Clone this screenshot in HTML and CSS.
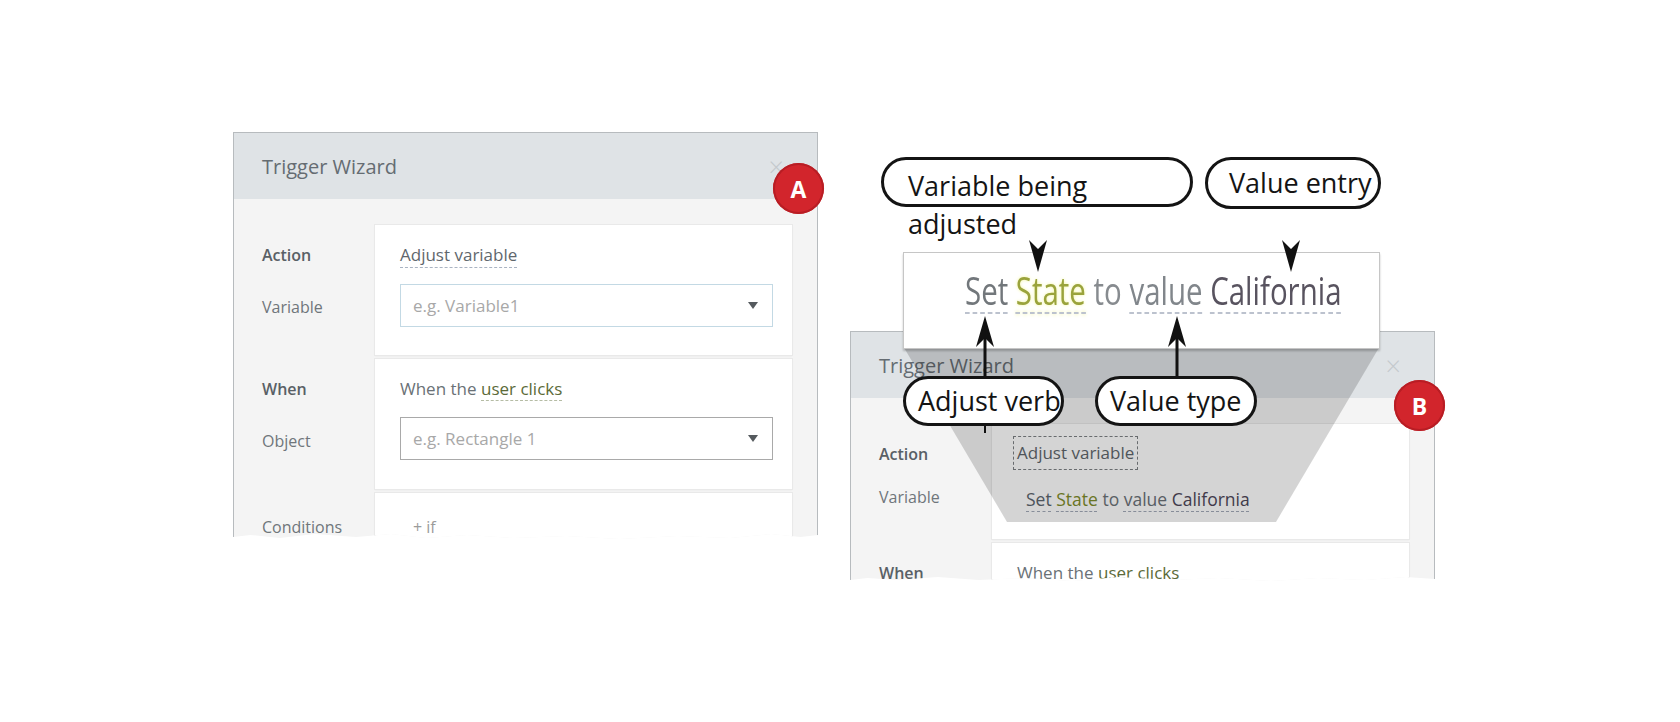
FILE: index.html
```html
<!DOCTYPE html>
<html lang="en">
<head>
<meta charset="utf-8">
<title>Trigger Wizard figure</title>
<link rel="stylesheet" href="styles.css">
</head>
<body>
<div class="figure">

  <section class="wizard wizard-a">
    <header class="wz-head"><span class="wz-title">Trigger Wizard</span><span class="wz-close">×</span></header>
    <div class="wz-body">
      <div class="wz-row">
        <div class="wz-labels"><span class="lbl-strong">Action</span><span>Variable</span></div>
        <div class="wz-card">
          <span class="link-text">Adjust variable</span>
          <div class="select select-focus"><span class="ph">e.g. Variable1</span><span class="caret"></span></div>
        </div>
      </div>
      <div class="wz-row">
        <div class="wz-labels"><span class="lbl-strong">When</span><span>Object</span></div>
        <div class="wz-card">
          <span class="plain-text">When the <span class="obj">user clicks</span></span>
          <div class="select"><span class="ph">e.g. Rectangle 1</span><span class="caret"></span></div>
        </div>
      </div>
      <div class="wz-row wz-row-cond">
        <div class="wz-labels"><span>Conditions</span></div>
        <div class="wz-card"><span class="add-if">+ if</span></div>
      </div>
    </div>
  </section>

  <section class="wizard wizard-b">
    <header class="wz-head"><span class="wz-title">Trigger Wizard</span><span class="wz-close">×</span></header>
    <div class="wz-body">
      <div class="wz-row wz-row-short">
        <div class="wz-labels wz-labels-tight"><span class="lbl-strong">Action</span><span>Variable</span></div>
        <div class="wz-card wz-card-b">
          <span class="dotted-box">Adjust variable</span>
          <span class="sentence"><span class="u w-set">Set</span> <span class="u w-state">State</span> <span class="w-to">to</span> <span class="u w-value">value</span> <span class="u w-cal">California</span></span>
        </div>
      </div>
      <div class="wz-row">
        <div class="wz-labels"><span class="lbl-strong">When</span><span>Object</span></div>
        <div class="wz-card">
          <span class="plain-text">When the <span class="obj">user clicks</span></span>
        </div>
      </div>
    </div>
  </section>

  <svg class="shade" width="1680" height="722" viewBox="0 0 1680 722" aria-hidden="true">
    <polygon points="903,346 1380,346 1276,522 1007,522" fill="rgba(0,0,0,0.17)"/>
  </svg>

  <div class="zoom-box">
    <span class="big-sentence"><span class="u w-set">Set</span> <span class="u w-state">State</span> <span class="w-to">to</span> <span class="u w-value">value</span> <span class="u w-cal">California</span></span>
  </div>

  <svg class="arrows" width="1680" height="722" viewBox="0 0 1680 722" aria-hidden="true">
    <path d="M1038 272 L1029 240 L1038 249 L1047 240 Z" fill="#111"/>
    <path d="M1291 272 L1282 240 L1291 249 L1300 240 Z" fill="#111"/>
    <line x1="985" y1="378" x2="985" y2="338" stroke="#111" stroke-width="3"/>
    <path d="M985 316 L976 347 L985 338 L994 347 Z" fill="#111"/>
    <line x1="985" y1="426" x2="985" y2="433" stroke="#111" stroke-width="2"/>
    <line x1="1177" y1="378" x2="1177" y2="338" stroke="#111" stroke-width="3"/>
    <path d="M1177 316 L1168 347 L1177 338 L1186 347 Z" fill="#111"/>
  </svg>

  <div class="bubble bubble-var"><span class="bubble-wrap">Variable being adjusted</span></div>
  <div class="bubble bubble-entry">Value entry</div>
  <div class="bubble bubble-verb">Adjust verb</div>
  <div class="bubble bubble-type">Value type</div>

  <div class="badge badge-a">A</div>
  <div class="badge badge-b">B</div>
</div>
</body>
</html>
```

FILE: styles.css
```css
* { box-sizing: border-box; }

html, body {
  margin: 0;
  padding: 0;
  background: #ffffff;
}

body {
  font-family: "Open Sans", "Noto Sans", sans-serif;
  overflow: hidden;
}

.figure {
  position: relative;
  width: 1680px;
  height: 722px;
  background: #ffffff;
}

/* ---------- wizard panel ---------- */
.wizard {
  position: absolute;
  width: 585px;
  border: 1px solid #b7bbbe;
  border-bottom: none;
  background: #f4f4f4;
  overflow: hidden;
}

.wizard-a {
  left: 233px;
  top: 132px;
  height: 410px;
  clip-path: polygon(0 0, 100% 0, 100% 403px, 97% 405px, 92% 402px, 85% 406px, 76% 404px, 66% 407px, 57% 404px, 48% 406px, 40% 403px, 33% 406px, 27% 402px, 21% 405px, 14% 402px, 8% 406px, 3% 403px, 0 405px);
}

.wizard-b {
  left: 850px;
  top: 331px;
  height: 252px;
  clip-path: polygon(0 0, 100% 0, 100% 248px, 95% 246px, 88% 249px, 80% 247px, 72% 250px, 63% 247px, 55% 249px, 46% 246px, 38% 250px, 30% 247px, 22% 249px, 15% 246px, 8% 249px, 3% 247px, 0 249px);
}

.wz-head {
  height: 66px;
  background: #dfe3e6;
  display: flex;
  align-items: center;
  justify-content: space-between;
  padding: 0 33px 0 28px;
}

.wz-title {
  font-size: 20px;
  color: #656c72;
}

.wz-close {
  font-size: 27px;
  font-weight: 300;
  color: #c4c9cd;
  line-height: 1;
}

.wz-body {
  padding: 26px 25px 0 0;
  display: flex;
  flex-direction: column;
  gap: 4px;
}

.wz-row {
  display: grid;
  grid-template-columns: 141px 1fr;
  height: 130px;
  flex: none;
}

.wz-row-short { height: 115px; }

.wz-labels {
  padding: 18px 0 0 28px;
  display: flex;
  flex-direction: column;
  gap: 28px;
  font-size: 16px;
  line-height: 24px;
  color: #6f767b;
}

.wz-labels-tight { gap: 19px; }

.wz-row-cond .wz-labels { padding-top: 22px; }

.lbl-strong {
  font-weight: 600;
  color: #596066;
}

.wz-card {
  background: #ffffff;
  padding: 18px 19px 0 25px;
  box-shadow: 0 0 0 1px #e9e9e9, 0 1px 2px rgba(0,0,0,0.06);
  display: flex;
  flex-direction: column;
  align-items: flex-start;
  gap: 16px;
}

.wz-row-cond .wz-card { padding-top: 22px; padding-left: 38px; }

.link-text {
  font-size: 17px;
  line-height: 24px;
  color: #5f676d;
  border-bottom: 1px dashed #a9b3c2;
}

.plain-text {
  font-size: 17px;
  line-height: 24px;
  color: #6a7176;
}

.obj {
  color: #5b6a38;
  border-bottom: 1px dashed #b5bca4;
}

.add-if {
  font-size: 16px;
  line-height: 24px;
  color: #9b9b9b;
}

.select {
  width: 100%;
  height: 43px;
  border: 1px solid #a9a9a9;
  display: flex;
  align-items: center;
  justify-content: space-between;
  padding: 0 14px 0 12px;
}

.select-focus { border-color: #c3d9e4; }

.ph {
  font-size: 17px;
  color: #a8a8a8;
}

.caret {
  width: 0;
  height: 0;
  border-left: 5px solid transparent;
  border-right: 5px solid transparent;
  border-top: 7px solid #555a5e;
}

/* panel B specific */
.wz-card-b {
  padding-top: 12px;
  padding-left: 21px;
  gap: 17px;
}

.dotted-box {
  font-size: 17px;
  line-height: 24px;
  color: #5f676d;
  padding: 4px 3px;
  border: 1px dashed #7d8185;
}

.sentence {
  margin-left: 13px;
  font-size: 17.5px;
  line-height: 24px;
  color: #6b7177;
}

.u {
  text-decoration: underline dashed #a3aab8;
  text-decoration-thickness: 1px;
  text-underline-offset: 5px;
}

.w-set { color: #5c666e; }
.w-state { color: #7f8d2c; }
.w-to { color: #6e7479; }
.w-value { color: #6b7178; }
.w-cal { color: #4e4859; }

/* ---------- magnified box ---------- */
.shade, .arrows {
  position: absolute;
  left: 0;
  top: 0;
}

.zoom-box {
  position: absolute;
  left: 903px;
  top: 252px;
  width: 477px;
  height: 97px;
  background: #ffffff;
  border: 1px solid #c6c6c6;
  box-shadow: 0 2px 2px rgba(0,0,0,0.22);
  padding: 12px 0 0 61px;
  overflow: hidden;
}

.big-sentence {
  display: inline-block;
  font-size: 38px;
  line-height: 50px;
  white-space: nowrap;
  transform: scaleX(0.775);
  transform-origin: left center;
  filter: blur(0.5px);
}

.big-sentence .u {
  text-decoration-thickness: 2px;
  text-decoration-color: #bcc2ce;
  text-underline-offset: 7px;
}

.big-sentence .w-set { color: #72777b; }
.big-sentence .w-state { color: #9aa33c; text-shadow: 0 0 4px #f2f59a; }
.big-sentence .w-to { color: #878b8f; }
.big-sentence .w-value { color: #81868b; }
.big-sentence .w-cal { color: #58535f; }

/* ---------- callout bubbles ---------- */
.bubble {
  position: absolute;
  border: 3px solid #141414;
  border-radius: 26px;
  background: #ffffff;
  font-size: 27px;
  color: #141414;
  white-space: nowrap;
  display: flex;
  align-items: center;
  line-height: 38px;
}

.bubble-var {
  left: 881px;
  top: 157px;
  width: 312px;
  height: 50px;
  align-items: flex-start;
  padding: 7px 0 0 24px;
}

.bubble-wrap {
  display: block;
  width: 200px;
  white-space: normal;
}

.bubble-entry {
  left: 1205px;
  top: 157px;
  width: 176px;
  height: 52px;
  padding-left: 21px;
}

.bubble-verb {
  left: 903px;
  top: 376px;
  width: 161px;
  height: 50px;
  padding-left: 12px;
}

.bubble-type {
  left: 1095px;
  top: 376px;
  width: 162px;
  height: 50px;
  padding-left: 12px;
}

/* ---------- badges ---------- */
.badge {
  position: absolute;
  width: 51px;
  height: 51px;
  border-radius: 50%;
  background: #d2252c;
  box-shadow: inset 0 0 0 2px #b81d24;
  color: #ffffff;
  font-size: 23px;
  font-weight: 700;
  display: flex;
  align-items: center;
  justify-content: center;
}

.badge-a { left: 773px; top: 163px; }
.badge-b { left: 1394px; top: 380px; }
```
